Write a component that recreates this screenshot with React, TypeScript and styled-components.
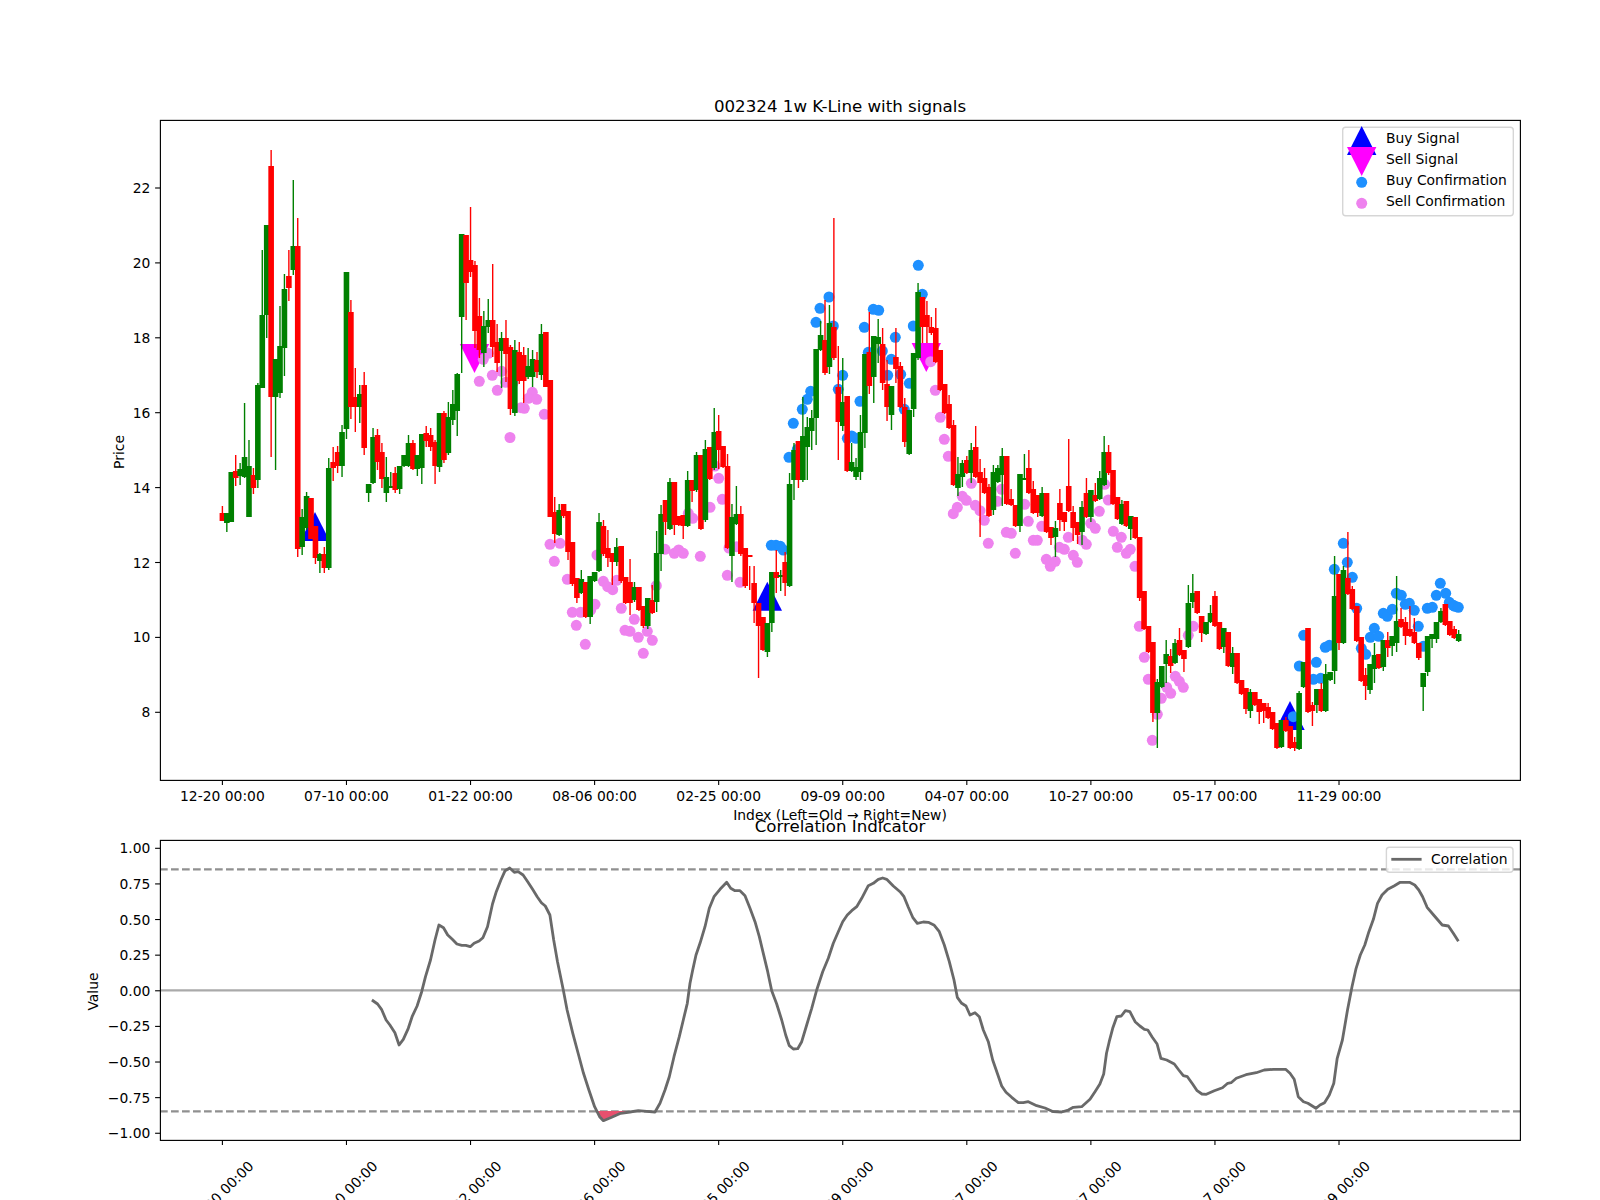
import React from "react";
import styled, { createGlobalStyle } from "styled-components";

const GlobalStyle = createGlobalStyle`
  html, body { margin: 0; padding: 0; background: #fff; }
  #root { width: 1600px; height: 1200px; overflow: hidden; }
`;

const FONT = `"DejaVu Sans", "Liberation Sans", sans-serif`;

const Page = styled.main`
  width: 1600px;
  height: 1200px;
  background: #ffffff;
  overflow: hidden;
`;
const Figure = styled.svg`
  display: block;
  width: 1600px;
  height: 1200px;
  font-family: ${FONT};
`;
const AxesFrame = styled.rect`
  fill: none;
  stroke: #000;
  stroke-width: 1.15;
`;
const TickMark = styled.line`
  stroke: #000;
  stroke-width: 1.1;
`;
const TickLabel = styled.text<{ $anchor?: string }>`
  font-size: 13.89px;
  fill: #000;
  text-anchor: ${(p) => p.$anchor || "middle"};
`;
const AxisTitle = styled.text`
  font-size: 13.89px;
  fill: #000;
  text-anchor: middle;
`;
const PlotTitle = styled.text`
  font-size: 16.67px;
  fill: #000;
  text-anchor: middle;
`;
const LegendBox = styled.rect`
  fill: rgba(255, 255, 255, 0.8);
  stroke: rgba(204, 204, 204, 0.8);
  stroke-width: 1.4;
`;
const LegendLabel = styled.text`
  font-size: 13.89px;
  fill: #000;
`;
const Wick = styled.line<{ $rise: boolean }>`
  stroke: ${(p) => (p.$rise ? "#ff0000" : "#008000")};
  stroke-width: 1.4;
`;
const Body = styled.rect<{ $rise: boolean }>`
  fill: ${(p) => (p.$rise ? "#ff0000" : "#008000")};
`;
const Dot = styled.circle<{ $kind: "buy" | "sell" }>`
  fill: ${(p) => (p.$kind === "buy" ? "#1e90ff" : "#ee82ee")};
`;
const Marker = styled.polygon<{ $kind: "buy" | "sell" }>`
  fill: ${(p) => (p.$kind === "buy" ? "#0000ff" : "#ff00ff")};
`;
const GuideDashed = styled.line`
  stroke: #909090;
  stroke-width: 2.1;
  stroke-dasharray: 7.7 3.3;
`;
const GuideZero = styled.line`
  stroke: #aaaaaa;
  stroke-width: 2.1;
`;
const CorrLine = styled.polyline`
  fill: none;
  stroke: #696969;
  stroke-width: 2.8;
  stroke-linejoin: round;
`;
const CorrSample = styled.line`
  stroke: #696969;
  stroke-width: 2.8;
`;
const CorrFill = styled.polygon`
  fill: #e8506e;
`;

// [rise, bodyTop, bodyBottom, wickTop, wickBottom] in figure pixels
type Candle = [number, number, number, number, number];
const candles: Candle[] = [
  [1,513,521,506,521],[0,513,523,513,532],[0,472,522,472,522],[1,471,478,455,486],[0,469,476,463,485],
  [0,457,477,403,478],[0,466,517,440,517],[1,475,488,468,494],[0,385,480,383,488],[0,315,388,250,388],
  [0,225,315,225,338],[1,166,397,150,457],[0,359,397,359,470],[0,346,393,306,398],[0,289,348,274,376],
  [1,276,288,250,301],[0,246,270,180,275],[1,246,549,218,557],[0,517,547,509,555],[0,496,528,492,530],
  [1,498,539,498,539],[1,526,558,526,564],[0,554,561,553,573],[1,554,568,547,573],[0,468,568,458,570],
  [1,462,468,447,481],[1,452,466,446,473],[0,432,466,425,477],[0,272,429,272,439],[1,312,407,300,419],
  [1,397,407,368,432],[0,394,407,385,423],[1,385,448,372,455],[0,484,493,484,502],[0,437,483,428,484],
  [1,435,462,429,470],[1,452,479,443,488],[0,477,493,457,502],[0,486,488,472,487],[1,473,490,467,493],
  [0,466,489,466,494],[0,455,466,455,467],[0,443,466,435,467],[1,443,469,440,470],[0,455,469,455,476],
  [0,434,468,434,484],[1,433,441,426,447],[1,435,447,428,451],[1,442,466,440,484],[0,413,467,413,472],
  [1,413,460,411,463],[0,417,453,402,455],[0,404,420,390,425],[0,374,411,373,436],[0,234,317,234,373],
  [1,235,283,235,320],[1,260,272,207,277],[1,265,331,261,348],[1,316,350,298,358],[0,326,353,311,367],
  [0,320,327,299,333],[1,320,347,264,357],[1,342,363,324,372],[0,338,351,332,388],[1,338,354,320,382],
  [1,347,409,345,415],[0,350,413,340,416],[1,352,381,342,384],[1,355,381,347,403],[0,366,377,348,379],
  [0,359,377,350,387],[1,360,372,352,378],[0,334,375,324,380],[1,332,387,332,387],[1,380,517,380,517],
  [1,512,534,497,543],[0,510,535,504,536],[1,504,516,504,518],[1,511,552,511,560],[1,542,584,542,586],
  [1,578,598,578,603],[0,579,593,570,594],[1,582,617,582,618],[0,576,617,576,624],[0,572,581,572,582],
  [0,522,571,513,572],[1,526,554,520,556],[1,548,558,530,567],[1,553,562,553,585],[0,547,562,538,566],
  [1,546,581,546,583],[1,577,603,577,604],[1,582,603,559,615],[0,587,600,582,602],[1,587,610,587,611],
  [1,606,626,606,628],[0,598,626,598,629],[1,600,613,585,614],[0,553,602,531,612],[0,514,554,505,571],
  [1,500,522,500,535],[0,482,529,478,530],[1,482,525,482,535],[1,516,525,516,526],[1,515,526,515,539],
  [0,480,526,471,527],[1,480,491,480,502],[0,455,490,452,492],[1,455,529,455,530],[0,449,520,440,522],
  [1,447,479,447,480],[0,432,468,408,470],[1,431,450,415,469],[1,446,467,446,468],[1,466,548,454,549],
  [0,517,556,504,582],[0,514,524,486,525],[1,514,554,506,556],[1,548,586,548,588],[1,555,557,566,590],
  [1,583,603,566,623],[1,603,626,603,678],[1,617,650,617,651],[0,623,652,623,657],[0,572,623,572,632],
  [1,572,578,550,593],[0,575,577,570,591],[1,562,583,552,596],[0,484,586,473,587],[0,450,480,443,500],
  [1,441,480,441,488],[0,436,480,397,482],[0,427,447,417,480],[0,418,431,410,450],[0,349,418,349,445],
  [0,335,350,321,351],[1,340,373,300,375],[0,323,367,305,374],[1,327,358,218,360],[1,387,422,346,460],
  [0,402,426,358,431],[1,396,471,396,472],[0,462,471,443,472],[0,467,477,458,480],[0,432,472,415,480],
  [0,354,433,354,448],[1,352,386,312,394],[0,336,377,336,403],[0,337,344,319,363],[1,344,383,328,390],
  [1,384,407,360,421],[0,386,415,386,430],[1,357,369,328,383],[1,366,407,362,408],[1,407,442,398,447],
  [0,410,454,410,455],[0,353,409,393,417],[0,292,358,283,360],[1,297,327,297,343],[1,315,327,301,343],
  [1,327,333,317,335],[1,328,362,308,363],[1,350,390,350,391],[1,384,413,384,414],[1,404,428,395,429],
  [1,425,485,420,486],[0,474,488,457,496],[0,463,477,460,487],[1,460,473,456,474],[0,450,473,443,483],
  [1,447,477,426,478],[1,472,483,459,537],[1,478,493,468,494],[1,487,516,484,517],[0,472,510,465,515],
  [0,468,482,465,483],[0,456,475,448,506],[1,456,504,456,505],[1,499,505,489,506],[1,505,526,505,527],
  [0,474,526,474,532],[0,478,480,454,480],[1,468,493,450,494],[1,489,513,481,514],[1,495,513,495,517],
  [0,493,516,487,517],[1,493,532,493,533],[1,527,538,527,545],[0,528,537,521,557],[1,503,520,489,531],
  [1,512,522,512,531],[1,486,511,439,512],[1,512,528,506,541],[1,522,535,522,544],[0,507,532,501,545],
  [1,493,517,478,518],[0,490,517,490,522],[1,495,501,483,502],[0,478,499,471,500],[0,452,485,436,486],
  [1,452,473,445,475],[1,470,504,470,505],[1,497,519,497,520],[0,504,524,500,525],[1,501,526,501,527],
  [0,516,529,516,540],[1,517,538,517,539],[1,537,598,537,601],[1,591,629,591,630],[1,626,652,626,653],
  [1,642,713,642,722],[0,682,713,679,748],[0,666,687,666,688],[0,654,664,640,683],[1,656,666,649,673],
  [0,643,663,639,664],[1,640,655,628,656],[1,650,659,650,672],[0,603,647,585,648],[0,593,602,574,608],
  [1,591,613,591,614],[1,616,633,616,642],[0,622,634,622,635],[0,613,622,605,623],[1,596,626,591,627],
  [1,622,649,622,650],[0,628,647,628,653],[1,632,666,632,667],[0,653,667,647,674],[1,653,683,653,684],
  [1,680,694,680,695],[1,688,709,688,714],[0,692,711,689,718],[1,692,705,692,706],[1,699,712,699,724],
  [1,703,711,703,723],[1,707,718,703,719],[1,712,729,712,730],[1,723,748,723,749],[0,720,747,720,748],
  [1,720,731,717,732],[1,726,748,726,749],[1,742,748,737,751],[0,693,749,691,750],[0,662,687,662,688],
  [1,628,712,628,713],[1,705,711,702,726],[0,689,705,689,713],[1,689,711,683,712],[0,674,711,664,712],
  [0,672,680,672,681],[0,596,671,556,684],[1,574,643,574,650],[0,570,643,566,644],[1,578,594,532,595],
  [1,589,609,586,610],[1,606,641,606,642],[1,637,681,637,682],[1,675,686,668,700],[0,664,690,664,694],
  [0,655,669,643,683],[1,654,668,654,669],[0,640,667,640,671],[1,640,648,632,657],[0,636,646,636,656],
  [0,621,643,576,652],[1,619,627,608,628],[1,622,636,617,645],[1,629,636,606,637],[1,632,643,618,644],
  [1,643,658,643,660],[0,673,687,673,711],[0,636,672,636,676],[0,634,639,634,648],[0,622,639,622,643],
  [0,611,622,608,623],[1,604,625,604,626],[1,621,635,621,636],[1,629,638,626,639],[0,634,641,630,642],
];
const CX0 = 222.4;
const CDX = 4.431;
const DOT_R = 5.5;

const buyDots: [number, number][] = [
  [771.3,545.3],[776,545.3],[780.3,546.3],[783.3,550],[789,457.3],[797.3,449.3],[793.3,423.3],[802.3,409.3],[807.3,399.3],[810.7,391.3],
  [816,322.3],[820,308.3],[829,297],[833.3,326],[842.7,375.3],[838.3,389.3],[847.3,438.3],[851.7,436],[856,438.3],[860,401.3],
  [864.3,327.3],[868.3,352.3],[873.3,309.3],[878.7,310.3],[882.3,351],[891.3,359.3],[895.3,337.3],[887.7,375.3],[900.7,374.3],[904.3,409.3],
  [909.3,383.3],[913.3,326],[918.3,265.3],[922.3,294.3],[1293.3,716.7],[1299.3,666],[1303.7,635.3],[1316.3,662.3],[1313.3,679.3],[1320.7,678.3],
  [1325.3,647.3],[1329.3,645.3],[1334.3,569.3],[1343.3,543.3],[1347.3,562.3],[1352.3,577.3],[1356.7,608.3],[1361.3,648.3],[1365.7,654.3],[1370.3,637.3],
  [1374.3,628.3],[1378.7,636.3],[1383.3,613.3],[1387.3,616.3],[1392.3,609.3],[1396.3,593.3],[1401.3,595.3],[1405.3,604.3],[1409.3,603.3],[1414.3,610.3],
  [1418.3,626.3],[1423.3,646.3],[1427.3,608.3],[1432.3,607.3],[1436.3,595.3],[1440.3,583.3],[1445.7,593.3],[1449.3,602.3],[1453.3,605.3],[1455,606.3],[1458.3,607.3],
];
const sellDots: [number, number][] = [
  [479.3,381.3],[492.3,375.3],[497.3,390.3],[501.7,371.3],[505.7,382.3],[488.3,353.3],[483.3,359.3],[513,383],[532.3,392.3],[528.3,398.3],
  [536.7,399.3],[521,407.7],[524.3,408.3],[544.3,414.3],[510,437.5],
  [550,544.3],[560,543.3],[554.3,561.3],[567.3,579.3],[572.3,612.3],[580.7,612.3],[576.3,625.3],[585.3,644.3],[595,604.3],[590.7,610],
  [603.3,581.3],[607.7,586.7],[612.7,589.7],[616.7,580.3],[621.3,608.3],[634.3,619.3],[625,630.3],[630,631.3],[638.3,637.3],[647.3,631.3],
  [652.3,640.3],[643.3,653.3],[656.3,585.7],[665,549.3],[674.3,553.3],[678.7,550],[683.3,553.3],[700.3,556.3],[692.7,518.3],[688.3,513.3],
  [710,507.3],[718.7,478.3],[722.3,499.3],[727.3,575.3],[740,582.3],[736.7,546.7],[729,548],[715,466],[597,555],
  [930.7,361.7],[935.3,390.3],[940.3,417.3],[944.3,439.3],[948.3,456.3],[971.3,483.3],[962.3,496.3],[966.3,500.3],[957.3,507.3],[953.3,513.7],
  [975.3,505.3],[980,510.7],[984.3,520.3],[988.3,543.3],[997.3,501.3],[1001.7,489.3],[1006.3,532.3],[1011.3,533.3],[1015.3,553.3],[1024.7,504.3],
  [1028.3,521.3],[1033.3,540.3],[1037.3,540.3],[1041.7,526.3],[1046.3,559.3],[1050.3,566.3],[1055.3,561.3],[1059.3,547.3],[1064.3,549.3],[1068.3,537.3],
  [1073.3,555.3],[1077.3,562.3],[1082.3,540.3],[1086.3,544.3],[1090.7,523.3],[1095.3,528.3],[1099.3,511.3],[1104.7,484.3],[1108.3,500],[1113.3,531.3],
  [1121.3,537.3],[1117.3,547.3],[1126.3,553.3],[1130.3,549.3],[1135,566.3],[1139.3,626.3],[1144.3,657.3],[1148.3,679.3],[1157.3,714.3],[1152.3,740.3],
  [1161.3,698.3],[1166.7,687.3],[1170.7,693.3],[1175.3,676.3],[1179.3,681.3],[1183.3,687.3],[1188.3,635.3],[1193.3,626.3],
];

const seg1: [number, number][] = [
  [815,660],[830,672],[840,688],[852,720],[862,735],[875,758],[886,795],[897,778],[910,745],[920,710],[933,678],[945,635],[955,590],[968,540],[980,480],[990,435],[1002,443],[1013,465],[1025,478],[1037,492],[1050,496],[1060,496],[1072,500],[1082,490],[1095,483],[1105,473],[1117,440],[1130,372],[1140,335],[1152,300],[1163,272],[1175,264],[1187,277],[1197,275],[1210,285],[1222,305],[1235,328],[1247,350],[1258,368],[1268,378],[1280,405],[1290,480],[1300,545],[1315,630],[1325,690],[1340,760],[1355,825],[1368,880],[1382,930],[1397,980],[1410,1010],[1420,1022],
];
const seg2: [number, number][] = [
  [35,1012],[62,1000],[90,996],[115,992],[140,994],[165,996],[180,970],[195,930],[208,890],[222,830],[238,770],[250,720],[262,670],[270,610],[278,570],[288,525],[300,490],[315,440],[328,385],[342,350],[360,328],[380,307],[392,325],[405,332],[420,332],[435,347],[450,385],[465,425],[478,470],[490,520],[503,575],[515,632],[530,672],[545,720],[557,765],[568,797],[580,807],[593,806],[605,785],[620,735],[635,685],[650,630],[668,575],[685,535],[700,490],[715,455],[728,425],[742,405],[755,392],[770,380],[785,355],[805,317],[820,310],[835,298],[848,294],[860,298],[880,318],[900,335],[912,350],[925,382],[938,412],[952,430],[970,426],[985,427],[1003,436],[1018,455],[1033,495],[1048,545],[1062,600],[1072,652],[1085,670],[1098,678],[1110,705],[1125,698],[1138,710],[1150,750],[1165,785],[1178,840],[1192,880],[1205,918],[1218,937],[1235,952],[1255,968],[1270,968],[1285,965],[1310,977],[1335,984],[1360,995],[1385,996],[1405,990],[1420,982],[1445,980],[1470,958],[1485,935],
];
const seg3: [number, number][] = [
  [116,912],[127,882],[135,820],[143,785],[153,745],[165,710],[178,708],[190,692],[203,695],[218,725],[232,738],[245,748],[255,750],[268,772],[282,792],[293,835],[310,840],[332,852],[345,870],[358,887],[370,890],[385,912],[398,932],[412,942],[425,943],[448,932],[472,923],[487,910],[497,908],[512,895],[540,884],[570,878],[593,870],[620,868],[655,868],[668,880],[680,898],[692,950],[707,965],[720,970],[743,985],[755,975],[768,968],[782,945],[795,910],[805,835],[820,780],[835,690],[848,620],[860,565],[872,525],[885,495],[897,455],[910,418],[922,370],[935,345],[952,328],[970,318],[988,307],[1015,307],[1030,315],[1042,330],[1053,350],[1066,382],[1085,405],[1110,435],[1128,438],[1142,460],[1157,484],
];
const corrPoints = [
  ...seg1.map(([x, y]) => [60 + x / 2.613, 780 + y / 3]),
  ...seg2.map(([x, y]) => [600 + x / 3, 780 + y / 3]),
  ...seg3.map(([x, y]) => [1060 + x / 2.904, 780 + y / 3]),
]
  .map(([x, y]) => `${x.toFixed(1)},${y.toFixed(1)}`)
  .join(" ");

const xLabels = ["12-20 00:00","07-10 00:00","01-22 00:00","08-06 00:00","02-25 00:00","09-09 00:00","04-07 00:00","10-27 00:00","05-17 00:00","11-29 00:00"];
const xTick = (k: number) => CX0 + 28 * CDX * k;
const priceTicks = [22, 20, 18, 16, 14, 12, 10, 8];
const priceY = (p: number) => 188 + (22 - p) * 37.45;
const corrTicks = ["1.00","0.75","0.50","0.25","0.00","−0.25","−0.50","−0.75","−1.00"];
const corrY = (i: number) => 848.3 + i * 35.62;

const triUp = (x: number, top: number) => `${x},${top} ${x - 14.7},${top + 29} ${x + 14.7},${top + 29}`;
const triDown = (x: number, top: number) => `${x - 14.7},${top} ${x + 14.7},${top} ${x},${top + 29}`;

export default function App() {
  return (
    <Page>
      <GlobalStyle />
      <Figure viewBox="0 0 1600 1200" xmlns="http://www.w3.org/2000/svg">
        {/* signals */}
        <Marker $kind="buy" points={triUp(315, 512)} />
        <Marker $kind="buy" points={triUp(767.3, 581.7)} />
        <Marker $kind="buy" points={triUp(1290, 701)} />
        <Marker $kind="sell" points={triDown(474.5, 344)} />
        <Marker $kind="sell" points={triDown(926.3, 343)} />
        {buyDots.map(([x, y], i) => <Dot key={`b${i}`} $kind="buy" cx={x} cy={y} r={DOT_R} />)}
        {sellDots.map(([x, y], i) => <Dot key={`s${i}`} $kind="sell" cx={x} cy={y} r={DOT_R} />)}
        {/* candles */}
        {candles.map(([rise, t, b, wt, wb], i) => {
          const x = CX0 + i * CDX;
          return (
            <g key={i}>
              <Wick $rise={!!rise} x1={x} x2={x} y1={wt} y2={wb} />
              <Body $rise={!!rise} x={x - 2.8} y={t} width={5.6} height={b - t} />
            </g>
          );
        })}

        {/* upper axes */}
        <AxesFrame x={160.4} y={120.4} width={1360} height={660} />
        {priceTicks.map((p) => (
          <g key={p}>
            <TickMark x1={155.1} x2={160} y1={priceY(p)} y2={priceY(p)} />
            <TickLabel $anchor="end" x={150.3} y={priceY(p) + 5}>{p}</TickLabel>
          </g>
        ))}
        {xLabels.map((l, k) => (
          <g key={l}>
            <TickMark x1={xTick(k)} x2={xTick(k)} y1={780} y2={785} />
            <TickLabel x={xTick(k)} y={801}>{l}</TickLabel>
          </g>
        ))}
        <PlotTitle x={840} y={112}>002324 1w K-Line with signals</PlotTitle>
        <AxisTitle transform="translate(124,452) rotate(-90)">Price</AxisTitle>
        <AxisTitle x={840} y={820}>Index (Left=Old → Right=New)</AxisTitle>

        {/* upper legend */}
        <LegendBox x={1342.7} y={127.3} width={170.6} height={88.4} rx={3} />
        <Marker $kind="buy" points={triUp(1361.7, 126)} />
        <Marker $kind="sell" points={triDown(1361.7, 147)} />
        <Dot $kind="buy" cx={1361.7} cy={182.3} r={DOT_R} />
        <Dot $kind="sell" cx={1361.7} cy={203.3} r={DOT_R} />
        <LegendLabel x={1386} y={142.7}>Buy Signal</LegendLabel>
        <LegendLabel x={1386} y={163.7}>Sell Signal</LegendLabel>
        <LegendLabel x={1386} y={184.7}>Buy Confirmation</LegendLabel>
        <LegendLabel x={1386} y={205.7}>Sell Confirmation</LegendLabel>

        {/* lower axes */}
        <GuideZero x1={160} x2={1520} y1={990.4} y2={990.4} />
        <GuideDashed x1={160} x2={1520} y1={869.4} y2={869.4} />
        <GuideDashed x1={160} x2={1520} y1={1111.4} y2={1111.4} />
        <CorrFill points="596,1111 603.3,1120 608,1118 614,1116 620,1113.5 628,1111" />
        <CorrLine points={corrPoints} />
        <AxesFrame x={160.4} y={840.4} width={1360} height={300} />
        {corrTicks.map((t, i) => (
          <g key={t}>
            <TickMark x1={155.1} x2={160} y1={corrY(i)} y2={corrY(i)} />
            <TickLabel $anchor="end" x={150.3} y={corrY(i) + 5}>{t}</TickLabel>
          </g>
        ))}
        {xLabels.map((l, k) => (
          <g key={`low${l}`}>
            <TickMark x1={xTick(k)} x2={xTick(k)} y1={1140} y2={1145} />
            <TickLabel transform={`translate(${xTick(k) - 1.5},1193.5) rotate(-45)`} y={5}>{l}</TickLabel>
          </g>
        ))}
        <PlotTitle x={840} y={832}>Correlation Indicator</PlotTitle>
        <AxisTitle transform="translate(98,991.5) rotate(-90)">Value</AxisTitle>

        {/* lower legend */}
        <LegendBox x={1386.4} y={847.3} width={126.6} height={25} rx={3} />
        <CorrSample x1={1391.3} x2={1421.6} y1={859.3} y2={859.3} />
        <LegendLabel x={1431} y={864}>Correlation</LegendLabel>
      </Figure>
    </Page>
  );
}
